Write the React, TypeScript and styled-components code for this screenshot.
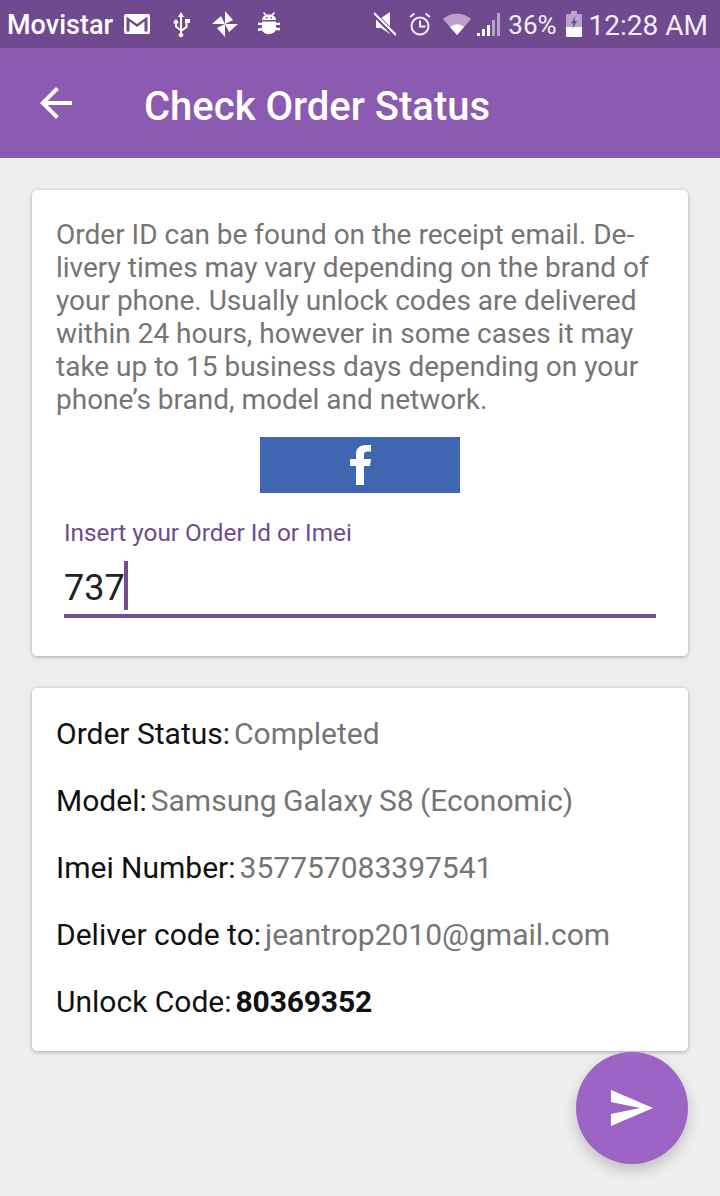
import React from 'react';
import styled, { createGlobalStyle } from 'styled-components';

const GlobalStyle = createGlobalStyle`
	html, body {
		margin: 0;
		padding: 0;
		background: #eeeeee;
		font-family: Roboto, "Noto Sans", sans-serif;
	}
`;

/* ───────────── layout ───────────── */

const Page = styled.div`
	position: relative;
	width: 720px;
	height: 1196px;
	overflow: hidden;
	background: #eeeeee;
	display: flex;
	flex-direction: column;
`;

const StatusBar = styled.div`
	height: 48px;
	background: #6f4a8e;
	color: #fff;
	display: flex;
	align-items: center;
	justify-content: space-between;
	padding: 0 12px 0 7px;
`;

const StatusGroup = styled.div`
	display: flex;
	align-items: center;
`;

const Carrier = styled.span`
	font-size: 27px;
	font-weight: 500;
	margin-right: 11px;
	padding-top: 2px;
`;

const StatusText = styled.span<{ $size: number; $gap?: number }>`
	font-size: ${({ $size }) => $size}px;
	color: #f3edf7;
	margin-right: ${({ $gap }) => $gap ?? 0}px;
	padding-top: 2px;
`;

const AppBar = styled.header`
	height: 110px;
	box-sizing: border-box;
	background: #8b5ab1;
	display: flex;
	align-items: center;
	padding-left: 40px;
	gap: 72px;
`;

const Title = styled.h1`
	margin: 0;
	padding-top: 6px;
	color: #fff;
	font-size: 40px;
	font-weight: 500;
`;

const Content = styled.main`
	display: flex;
	flex-direction: column;
	gap: 32px;
	padding: 32px 32px 0;
`;

const Card = styled.section`
	background: #fff;
	border-radius: 5px;
	box-shadow: 0 1px 4px rgba(0, 0, 0, 0.3);
`;

/* ───────────── first card ───────────── */

const FormCard = styled(Card)`
	height: 466px;
	box-sizing: border-box;
	padding: 28px 24px 0;
	display: flex;
	flex-direction: column;
`;

const Intro = styled.p`
	margin: 0;
	color: #757575;
	font-size: 28px;
	line-height: 33px;
	white-space: nowrap;
`;

const FacebookButton = styled.div`
	width: 200px;
	height: 56px;
	margin: 21px auto 0;
	background: #3f66b0;
	display: flex;
	align-items: center;
	justify-content: center;
`;

const FieldLabel = styled.label`
	margin: 25px 8px 0;
	color: #6f4a8e;
	font-size: 24.300px;
	line-height: 30px;
`;

const Field = styled.div`
	margin: 0 8px;
	height: 52px;
	padding-top: 14px;
	border-bottom: 4px solid #744c92;
	display: flex;
	align-items: center;
	color: #212121;
	font-size: 36px;
`;

const Caret = styled.span`
	width: 4px;
	height: 49px;
	background: #744c92;
	margin: 0 0 5px -1px;
`;

/* ───────────── second card ───────────── */

const ResultCard = styled(Card)`
	height: 363px;
	box-sizing: border-box;
	padding: 12px 24px 0;
	display: flex;
	flex-direction: column;
`;

const Row = styled.div`
	height: 67px;
	display: flex;
	align-items: center;
	gap: 4px;
	font-size: 30px;
`;

const RowLabel = styled.span`
	color: #111;
`;

const RowValue = styled.span<{ $strong?: boolean }>`
	color: ${({ $strong }) => ($strong ? '#111' : '#757575')};
	font-weight: ${({ $strong }) => ($strong ? 700 : 400)};
	letter-spacing: ${({ $strong }) => ($strong ? '-0.15px' : '0')};
	word-spacing: -1px;
`;

const Fab = styled.button`
	position: absolute;
	left: 576px;
	top: 1052px;
	width: 112px;
	height: 112px;
	border: 0;
	padding: 0;
	border-radius: 50%;
	background: #9c64c4;
	box-shadow: 0 6px 14px rgba(0, 0, 0, 0.2);
	display: flex;
	align-items: center;
	justify-content: center;
`;

/* ───────────── icons ───────────── */

const IconSvg = styled.svg<{ $gap?: number }>`
	display: block;
	flex: none;
	margin-right: ${({ $gap }) => $gap ?? 0}px;
`;

const Mail = () => (
	<IconSvg $gap={22} width="26" height="20" viewBox="0 0 26 20">
		<path fill="#fff" d="M2 0h22a2 2 0 0 1 2 2v16a2 2 0 0 1-2 2H2a2 2 0 0 1-2-2V2a2 2 0 0 1 2-2z" />
		<path fill="#6f4a8e" d="M2.500 2.500L13 10l10.500-7.500v15H20.500V7.500L13 13 5.500 7.500v10h-3z" />
	</IconSvg>
);

const Usb = () => (
	<IconSvg $gap={21} width="19" height="25" viewBox="0 0 19 25" fill="#fff">
		<path d="M9 0l3 5h-2v12l3.500-2.500V11H13V7h5v4h-2.500v4.500L10 19.500v1.700a2.200 2.200 0 1 1-2 0v-2.500L3 15v-3a2.200 2.200 0 1 1 2 0v2l3 2.500V5H6z" />
	</IconSvg>
);

const Pinwheel = () => (
	<IconSvg $gap={20} width="26" height="26" viewBox="0 0 26 26" fill="#fff">
		<path d="M13 13V0l8 9z" />
		<path d="M13 13h13l-9 8z" />
		<path d="M13 13v13l-8-9z" />
		<path d="M13 13H0l9-8z" />
	</IconSvg>
);

const Bug = () => (
	<IconSvg $gap={0} width="22" height="25" viewBox="0 0 22 25" fill="#fff">
		<path fillRule="evenodd" d="M6 0l2.500 2.500h5L16 0l1 1-2 2.500c2 1 3 2.500 3 4.500H4c0-2 1-3.500 3-4.500L5 1zM8 5v1.500h1.500V5zm4.500 0v1.500H14V5z" />
		<path d="M4 9.500h14V11l4-.5v2.500h-4v2.500l4 .5v2.500l-4-.5A8 7.500 0 0 1 4 18.500L0 19v-2.500l4-.5V13H0v-2.500l4 .5z" />
	</IconSvg>
);

const Muted = () => (
	<IconSvg $gap={13} width="22" height="24" viewBox="0 0 22 24" fill="none">
		<path fill="#fff" d="M2 6h5l9-6v22l-9-6H2z" />
		<path stroke="#6f4a8e" strokeWidth="5" d="M0 2l22 22" />
		<path stroke="#fff" strokeWidth="2" d="M0 1l22 22" />
	</IconSvg>
);

const Alarm = () => (
	<IconSvg $gap={12} width="22" height="24" viewBox="0 0 22 24" fill="none" stroke="#f3edf7" strokeWidth="2">
		<circle cx="11" cy="14" r="8.500" />
		<path d="M11 8.500v6h5.500M1 5l4.500-3.500M21 5l-4.500-3.500" />
	</IconSvg>
);

const Wifi = () => (
	<IconSvg $gap={6} width="28" height="22" viewBox="0 0 28 22">
		<path fill="#b9a3cb" d="M0 6a21 21 0 0 1 28 0L14 22z" />
		<path fill="#fff" d="M7 14a10 10 0 0 1 14 0l-7 8z" />
	</IconSvg>
);

const Signal = () => (
	<IconSvg $gap={7} width="24" height="24" viewBox="0 0 24 24">
		<path fill="#fff" d="M0 24h3v-3H0zM5 24h3v-7H5zM10 24h3V13h-3z" />
		<path fill="#b9a3cb" d="M15 24h3V8h-3zM20 24h3V1h-3z" />
	</IconSvg>
);

const Battery = () => (
	<IconSvg $gap={7} width="16" height="26" viewBox="0 0 16 26">
		<path fill="#b9a3cb" d="M5 0h6v3h4a1 1 0 0 1 1 1v12H0V4a1 1 0 0 1 1-1h4z" />
		<path fill="#fff" d="M0 16h16v9a1 1 0 0 1-1 1H1a1 1 0 0 1-1-1z" />
		<path fill="#6f4a8e" d="M9.500 5L5 12.500h2.500L6.500 18l4.500-8H8.500z" />
	</IconSvg>
);

const BackArrow = () => (
	<IconSvg width="32" height="32" viewBox="0 0 32 32">
		<path fill="#fff" d="M32 14H7.700L18.900 2.800 16 0 0 16l16 16 2.800-2.800L7.700 18H32z" />
	</IconSvg>
);

const FacebookF = () => (
	<IconSvg width="21" height="40" viewBox="0 0 21 40">
		<path fill="#fff" d="M14 40V21h6l1-7h-7v-4c0-2 .8-3.500 3.500-3.500H21V0h-5C9 0 6 4 6 9v5H0v7h6v19z" />
	</IconSvg>
);

const Send = () => (
	<IconSvg width="42" height="36" viewBox="0 0 42 36">
		<path fill="#fff" d="M0 36l42-18L0 0v12l29 6-29 6z" />
	</IconSvg>
);

/* ───────────── page ───────────── */

const rows = [
	{ label: 'Order Status:', value: 'Completed' },
	{ label: 'Model:', value: 'Samsung Galaxy S8 (Economic)' },
	{ label: 'Imei Number:', value: '357757083397541' },
	{ label: 'Deliver code to:', value: 'jeantrop2010@gmail.com' },
	{ label: 'Unlock Code:', value: '80369352', strong: true },
];

const App: React.FC = () => (
	<Page>
		<GlobalStyle />
		<StatusBar>
			<StatusGroup>
				<Carrier>Movistar</Carrier>
				<Mail />
				<Usb />
				<Pinwheel />
				<Bug />
			</StatusGroup>
			<StatusGroup>
				<Muted />
				<Alarm />
				<Wifi />
				<Signal />
				<StatusText $size={26} $gap={9}>36%</StatusText>
				<Battery />
				<StatusText $size={28}>12:28 AM</StatusText>
			</StatusGroup>
		</StatusBar>
		<AppBar>
			<BackArrow />
			<Title>Check Order Status</Title>
		</AppBar>
		<Content>
			<FormCard>
				<Intro>
					Order ID can be found on the receipt email. De-
					<br />
					livery times may vary depending on the brand of
					<br />
					your phone. Usually unlock codes are delivered
					<br />
					within 24 hours, however in some cases it may
					<br />
					take up to 15 business days depending on your
					<br />
					phone’s brand, model and network.
				</Intro>
				<FacebookButton>
					<FacebookF />
				</FacebookButton>
				<FieldLabel>Insert your Order Id or Imei</FieldLabel>
				<Field>
					737
					<Caret />
				</Field>
			</FormCard>
			<ResultCard>
				{rows.map((row) => (
					<Row key={row.label}>
						<RowLabel>{row.label}</RowLabel>
						<RowValue $strong={row.strong}>{row.value}</RowValue>
					</Row>
				))}
			</ResultCard>
		</Content>
		<Fab>
			<Send />
		</Fab>
	</Page>
);

export default App;
